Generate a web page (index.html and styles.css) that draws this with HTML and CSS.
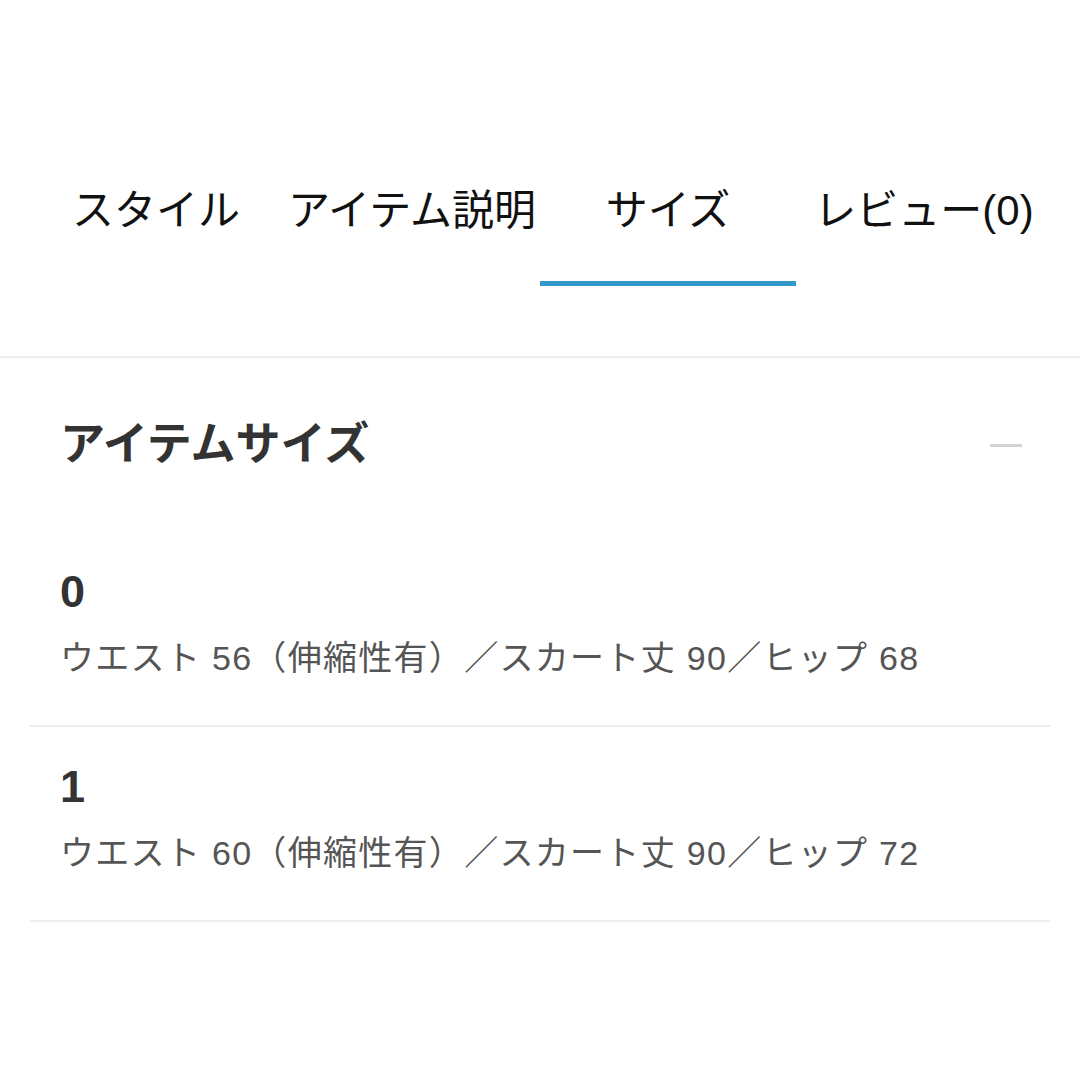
FILE: index.html
```html
<!DOCTYPE html>
<html lang="ja">
<head>
<meta charset="utf-8">
<link rel="stylesheet" href="styles.css">
</head>
<body>
<nav class="tabbar">
  <div class="tab"><span class="tab-label">スタイル</span></div>
  <div class="tab"><span class="tab-label">アイテム説明</span></div>
  <div class="tab active"><span class="tab-label">サイズ</span></div>
  <div class="tab"><span class="tab-label">レビュー(0)</span></div>
</nav>
<section class="sizes">
  <div class="sizes-head">
    <h2 class="sizes-title">アイテムサイズ</h2>
    <span class="collapse"></span>
  </div>
  <ul class="size-list">
    <li class="size-row">
      <div class="size-name">0</div>
      <div class="size-desc">ウエスト 56（伸縮性有）／スカート丈 90／ヒップ 68</div>
    </li>
    <li class="size-row">
      <div class="size-name">1</div>
      <div class="size-desc">ウエスト 60（伸縮性有）／スカート丈 90／ヒップ 72</div>
    </li>
  </ul>
</section>
</body>
</html>
```

FILE: styles.css
```css
* { box-sizing: border-box; }
html, body { margin: 0; padding: 0; background: #fff; }
body {
  font-family: "Liberation Sans", "Noto Sans CJK JP", sans-serif;
  width: 1080px;
}
.tabbar {
  display: flex;
  padding: 180px 28px 0;
  border-bottom: 2px solid #eeeeee;
}
.tab {
  flex: 1;
  display: flex;
  flex-direction: column;
  align-items: center;
  padding-bottom: 70px;
}
.tab-label {
  display: block;
  width: 100%;
  font-size: 42px;
  line-height: 61px;
  color: #111;
  white-space: nowrap;
  text-align: center;
  padding-bottom: 40px;
  border-bottom: 5px solid transparent;
}
.tab.active .tab-label { border-bottom-color: #3399cc; }
.sizes-head {
  display: flex;
  align-items: center;
  justify-content: space-between;
  padding: 54px 58px 0 60px;
}
.sizes-title {
  margin: 0;
  font-size: 45px;
  line-height: 66px;
  font-weight: 700;
  color: #333;
}
.collapse {
  display: block;
  width: 32px;
  height: 3px;
  background: #d4d4d4;
}
.size-list {
  list-style: none;
  margin: 54px 30px 0;
  padding: 0;
}
.size-row {
  padding: 35px 30px 42px;
  border-bottom: 2px solid #eeeeee;
}
.size-name {
  font-size: 45px;
  line-height: 50px;
  font-weight: 700;
  color: #333;
}
.size-desc {
  margin-top: 16px;
  font-size: 34px;
  line-height: 50px;
  letter-spacing: 1.3px;
  color: #555;
  white-space: nowrap;
}
```
